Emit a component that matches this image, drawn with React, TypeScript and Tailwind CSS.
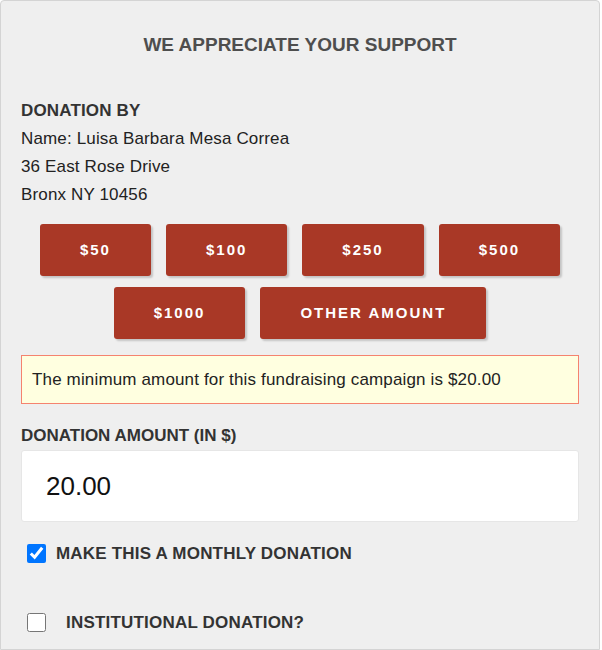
import { useState } from "react";

const amounts = ["$50", "$100", "$250", "$500", "$1000", "OTHER AMOUNT"];

export default function App() {
  const [monthly, setMonthly] = useState(true);
  const [institutional, setInstitutional] = useState(false);

  return (
    <div className="bg-white min-h-[650px] font-['Liberation_Sans',Arial,sans-serif]">
      <div className="w-[600px] min-h-[650px] bg-[#efefef] border border-[#d4d4d4] rounded-t-[4px] px-5">
        <h2 className="pt-[32px] text-center text-[19px] leading-[24px] font-bold text-[#4e4e4e]">
          WE APPRECIATE YOUR SUPPORT
        </h2>

        <div className="mt-[40px] text-[17px] leading-[28px] tracking-[0.15px] text-[#222]">
          <div className="font-bold text-[#333]">DONATION BY</div>
          <div>Name: Luisa Barbara Mesa Correa</div>
          <div>36 East Rose Drive</div>
          <div>Bronx NY 10456</div>
        </div>

        <div className="mt-[15px] flex flex-wrap justify-center gap-x-[15px] gap-y-[11px]">
          {amounts.map((amount) => (
            <button
              key={amount}
              className="h-[52px] px-[40px] rounded-[3px] bg-[#a93826] text-white text-[15px] font-bold tracking-[2px] shadow-[2px_2px_2px_rgba(0,0,0,0.18)]"
            >
              {amount}
            </button>
          ))}
        </div>

        <div className="mt-[16px] h-[49px] flex items-center px-[10px] border border-[#f5836f] bg-[#ffffe0] text-[17px] tracking-[0.15px] text-[#222]">
          The minimum amount for this fundraising campaign is $20.00
        </div>

        <label className="block mt-[22px] text-[17px] leading-[20px] font-bold text-[#333]">
          DONATION AMOUNT (IN $)
        </label>
        <input
          className="mt-[4px] w-full h-[72px] px-[24px] rounded-[3px] bg-white border border-[#e6e6e6] text-[26px] text-[#111] outline-none"
          defaultValue="20.00"
        />

        <label className="mt-[19px] ml-[6px] flex items-center gap-[10px] text-[17px] font-bold tracking-[0.2px] text-[#333]">
          <input
            type="checkbox"
            checked={monthly}
            onChange={(e) => setMonthly(e.target.checked)}
            className="w-[19px] h-[19px] m-0 accent-[#0075ff]"
          />
          MAKE THIS A MONTHLY DONATION
        </label>

        <label className="mt-[43px] ml-[6px] flex items-center gap-[20px] text-[17px] font-bold tracking-[0.2px] text-[#333]">
          <input
            type="checkbox"
            checked={institutional}
            onChange={(e) => setInstitutional(e.target.checked)}
            className="w-[19px] h-[19px] m-0 accent-[#0075ff]"
          />
          INSTITUTIONAL DONATION?
        </label>
      </div>
    </div>
  );
}
